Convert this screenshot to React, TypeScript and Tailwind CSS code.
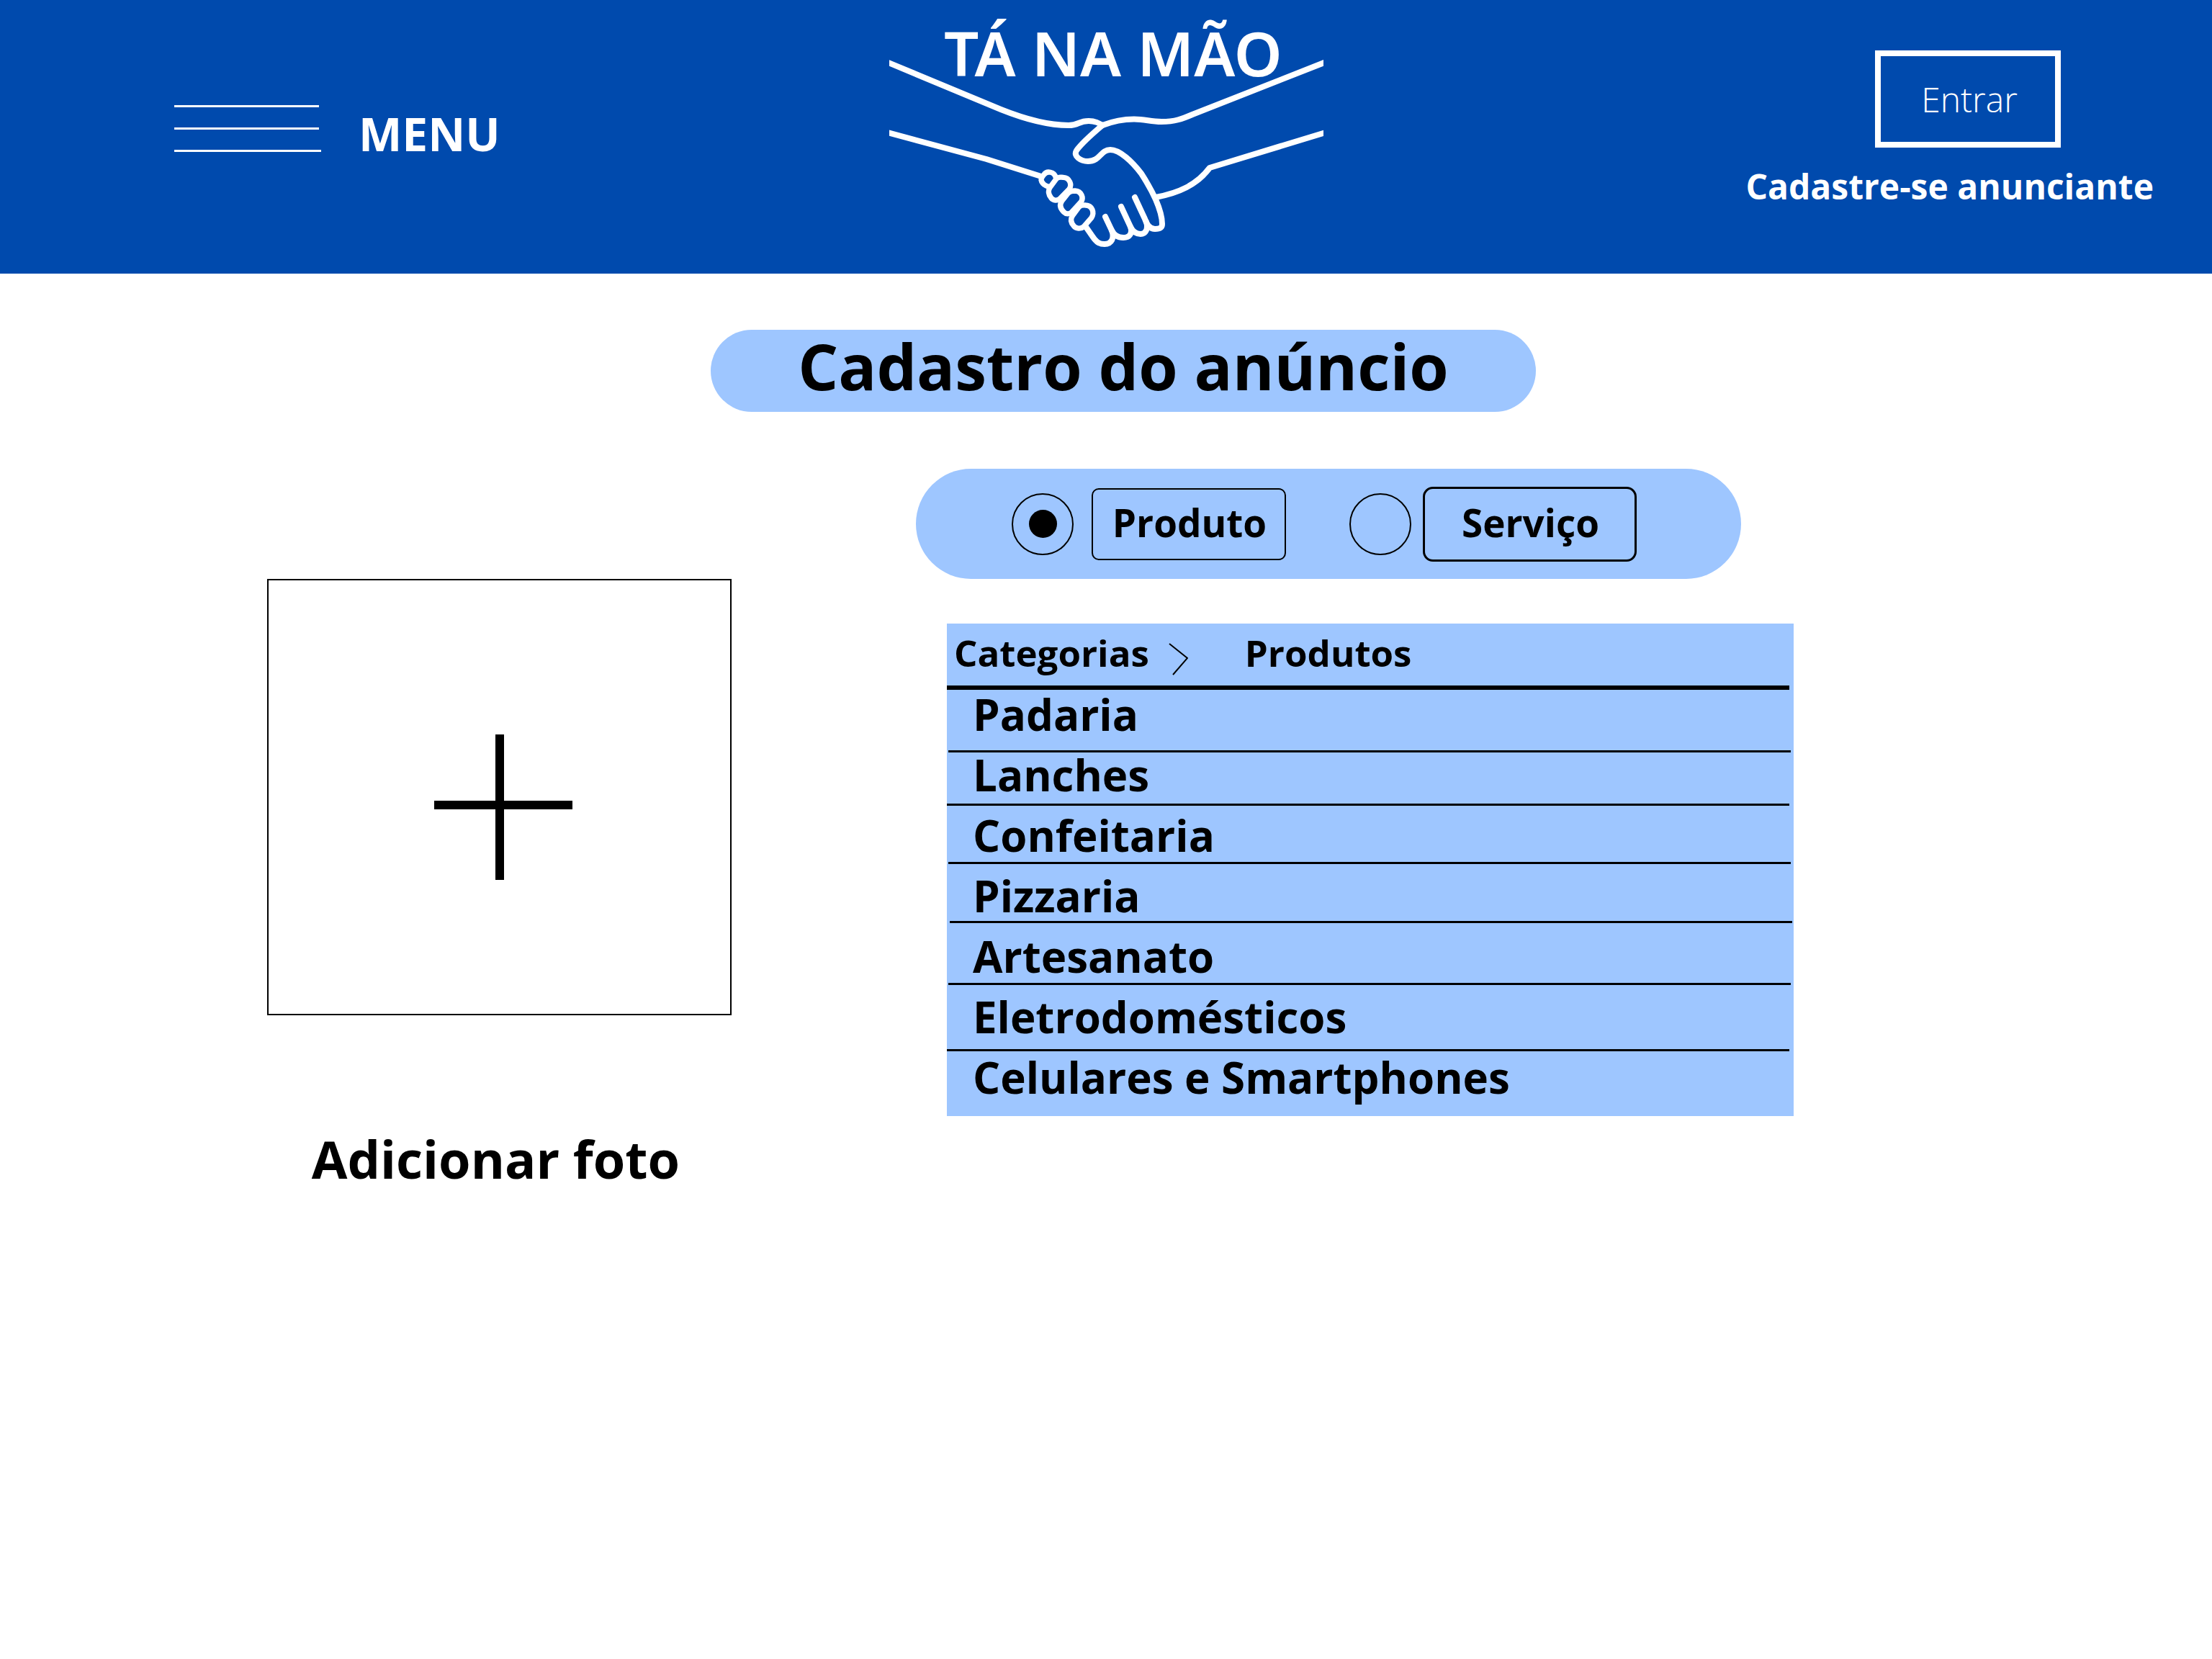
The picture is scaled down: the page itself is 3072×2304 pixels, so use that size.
import { useState } from "react";

const kinds = [
  {
    id: "produto",
    label: "Produto",
    group: "ml-[133px] gap-[25px]",
    box: "h-[100px] w-[270px] rounded-[10px] border-2",
  },
  {
    id: "servico",
    label: "Serviço",
    group: "ml-[88px] gap-4",
    box: "h-[104px] w-[297px] rounded-[14px] border-3",
  },
];

const categories = [
  { name: "Padaria", row: "ml-0.5 mr-1 h-[87px] border-b-3 pt-1 pl-[34px]" },
  { name: "Lanches", row: "mr-1.5 h-[74px] border-b-3 pt-px pl-9" },
  { name: "Confeitaria", row: "ml-0.5 mr-1 h-[81px] border-b-3 pt-[11px] pl-[34px]" },
  { name: "Pizzaria", row: "ml-1 mr-0.5 h-[82px] border-b-3 pt-3.5 pl-8" },
  { name: "Artesanato", row: "ml-0.5 mr-1 h-[86px] border-b-3 pt-4 pl-[34px]" },
  { name: "Eletrodomésticos", row: "mr-1.5 h-[92px] border-b-3 pt-3.5 pl-9" },
  { name: "Celulares e Smartphones", row: "mr-1.5 h-[90px] pt-1.5 pl-9" },
];

function Logo() {
  return (
    <svg
      viewBox="0 -80 603 344"
      className="h-[344px] w-[603px]"
      role="img"
      aria-label="Tá na mão"
      fill="none"
      stroke="white"
      strokeWidth="8"
      strokeLinecap="round"
      strokeLinejoin="round"
    >
      <text
        x="76"
        y="26"
        fill="white"
        stroke="none"
        className="font-['Noto_Sans'] text-[85px] font-semibold"
      >
        TÁ NA MÃO
      </text>
      <path d="M-6 5 L155 72 C190 86 222 94 249 94 C264 94 262 88 277 88 C286 88 291 91 296 94" />
      <path d="M609 5 L421 79 C407 85 397 89 378 89 C362 89 356 85.5 340 85.5 C322 85.5 309 89 296 94" />
      <path d="M296 94 C283 105 267 119 260 129 C255 137 266 144 276 144 C293 144 293 128 307 128 C320 128 337 144 350 161 C359 175 365 186 370 197 C376 211 379 223 379 231 C379 237 375 238 369 238 C362 238 358 233 355 224 L341 194" />
      <path d="M322 207 L335 235 C339 243 344 245 349 245 C356 245 360 238 357 228" />
      <path d="M300 221 L309 240 C313 248 319 250 325 250 C334 250 338 244 335 235" />
      <path d="M273 235 L282 248 C288 257 292 259 299 259 C309 259 313 250 309 240" />
      <path d="M609 103 L445 153 C427 177 402 188 370 194" />
      <path d="M-6 103 L135 141 L211 165" />
      <g transform="translate(194 70) scale(0.3333)" strokeWidth="22">
        <path d="M112 290 C106 264 74 261 63 277 C55 287 51 292 51 300 C54 314 62 322 82 328" />
        <path d="M114 295 L88 330 C78 345 82 362 92 374 C102 387 118 386 127 380 L168 338 C180 320 170 290 143 289 C128 287 120 288 114 295 Z" />
        <path d="M163 355 L137 388 C125 405 132 420 145 433 C155 443 168 443 177 435 L218 390 C228 375 220 347 192 345 C180 345 170 347 163 355 Z" />
        <path d="M208 413 L182 448 C172 462 175 478 187 492 C197 503 215 505 228 495 L260 458 C275 435 263 406 236 405 C222 404 214 406 208 413 Z" />
      </g>
    </svg>
  );
}

function Header() {
  return (
    <header className="grid h-[380px] grid-cols-[1fr_auto_1fr] bg-[#004aad] text-white">
      <button type="button" className="mt-36 flex h-[90px] items-start pl-[242px]">
        <span className="mt-0.5 flex w-[204px] flex-col gap-7">
          <span className="h-[3px] w-[201px] bg-white" />
          <span className="h-[3px] w-[201px] bg-white" />
          <span className="h-[3px] w-full bg-white" />
        </span>
        <span className="ml-[52px] text-[64px] leading-[84px] font-bold">MENU</span>
      </button>
      <Logo />
      <div className="flex flex-col items-end pt-[70px] pr-[81px]">
        <button
          type="button"
          className="mr-[129px] h-[135px] w-[258px] border-8 border-white pl-1 text-[48px] font-light"
        >
          Entrar
        </button>
        <a href="#cadastro" className="mt-5 text-[48px] leading-[68px] font-bold">
          Cadastre-se anunciante
        </a>
      </div>
    </header>
  );
}

function PhotoUpload() {
  return (
    <div className="col-start-2 mt-[153px] flex flex-col">
      <button
        type="button"
        aria-labelledby="photo-label"
        className="flex aspect-[645/606] w-full items-center justify-center border-2 border-black pt-7 pl-2.5"
      >
        <svg viewBox="0 0 192 202" className="h-[202px] w-[192px]" fill="black">
          <rect x="0" y="92" width="192" height="12" />
          <rect x="85" y="0" width="12" height="202" />
        </svg>
      </button>
      <span id="photo-label" className="mt-[149px] pr-2.5 text-center text-[72px] leading-[100px] font-bold">
        Adicionar foto
      </span>
    </div>
  );
}

function KindPicker() {
  const [kind, setKind] = useState("produto");
  return (
    <fieldset className="flex h-[153px] w-[94%] items-center rounded-full bg-[#9ec6ff]">
      {kinds.map((k) => (
        <label key={k.id} className={`flex items-center ${k.group}`}>
          <input
            type="radio"
            name="kind"
            value={k.id}
            checked={kind === k.id}
            onChange={() => setKind(k.id)}
            className="grid size-[86px] shrink-0 appearance-none place-content-center rounded-full border-2 border-black before:size-[39px] before:rounded-full checked:before:bg-black"
          />
          <span
            className={`flex items-center justify-center border-black pb-1 pl-0.5 text-[53px] leading-none font-bold ${k.box}`}
          >
            {k.label}
          </span>
        </label>
      ))}
    </fieldset>
  );
}

function CategoryPanel() {
  return (
    <section className="mt-[62px] ml-[43px] bg-[#9ec6ff]">
      <nav className="mr-1.5 flex h-[92px] items-start border-b-6 border-black pt-1 pl-2.5 text-[51px] leading-[72px] font-bold">
        <a href="#categorias">Categorias</a>
        <svg
          viewBox="0 0 28 46"
          className="mt-[22px] ml-[26px] h-[46px] w-7"
          fill="none"
          stroke="black"
          strokeWidth="2"
        >
          <path d="M2 2 L27 22 L7 45" />
        </svg>
        <a href="#produtos" className="ml-[79px]">
          Produtos
        </a>
      </nav>
      <ul className="text-[60px] leading-[60px] font-bold">
        {categories.map((c) => (
          <li key={c.name} className={`border-black ${c.row}`}>
            <a href="#categoria">{c.name}</a>
          </li>
        ))}
      </ul>
    </section>
  );
}

export default function App() {
  return (
    <div className="min-h-screen bg-white font-['Open_Sans',sans-serif] text-black">
      <Header />
      <main>
        <div className="flex justify-center pt-[78px] pl-12">
          <h1 className="h-[114px] w-[1146px] rounded-full bg-[#9ec6ff] text-center text-[88px] leading-[100px] font-bold">
            Cadastro do anúncio
          </h1>
        </div>
        <div className="mt-[79px] grid grid-cols-[371fr_645fr_256fr_1219fr_581fr]">
          <PhotoUpload />
          <div className="col-start-4">
            <KindPicker />
            <CategoryPanel />
          </div>
        </div>
      </main>
    </div>
  );
}
